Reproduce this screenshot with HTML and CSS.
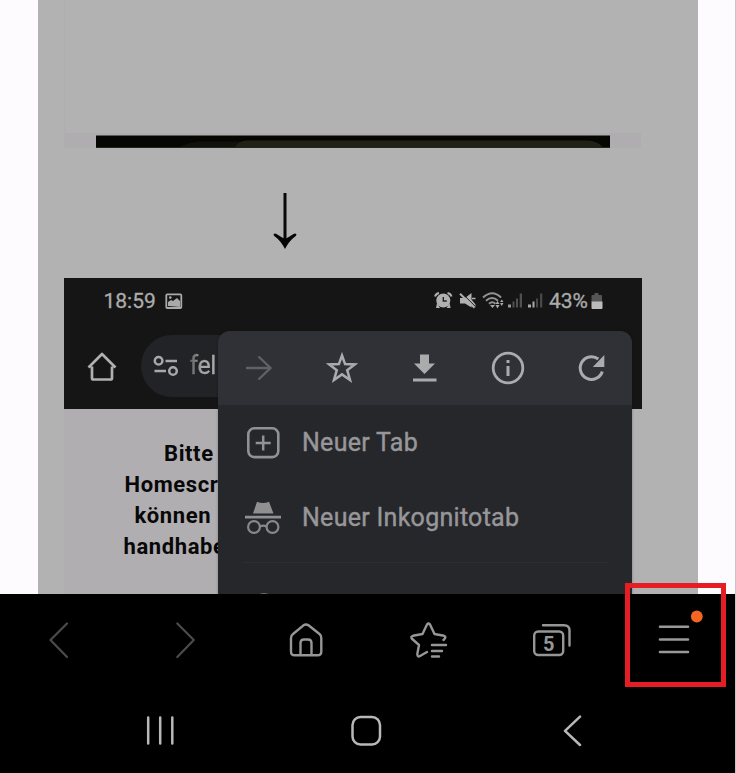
FILE: index.html
```html
<!DOCTYPE html>
<html lang="de">
<head>
<meta charset="utf-8">
<title>Browser</title>
<link rel="stylesheet" href="styles.css">
</head>
<body>
<div class="screen">
  <main class="viewport">
    <div class="page">
      <div class="upper"><div class="strip">
        <svg width="514" height="13" viewBox="0 0 514 13"><path d="M0 .500h514v12.500H0z" fill="#060703"/><path d="M84 12Q90 8 102 6.500H490Q504 7 507 12z" fill="#12110b"/><path d="M139 12Q143 5.500 151 5.500H490Q503 6 506 12z" fill="#222115"/><path d="M0 12.700h514" stroke="#44443b" stroke-width=".600"/></svg>
      </div></div>
      <div class="arrow"><svg width="26" height="58" viewBox="0 0 26 58"><path d="M13 1v48" stroke="#080808" stroke-width="3"/><path d="M1.500 42.500Q2.500 40.800 4.500 42Q9 45 13 47Q17 45 21.500 42Q23.500 40.800 24.500 42.500L24 43.800Q17 49 13 57Q9 49 2 43.800z" fill="#050505"/></svg></div>
      <div class="phone">
        <div class="status">
          <span class="time">18:59</span>
          <svg class="pic" width="18" height="17" viewBox="0 0 18 17"><rect x="1.300" y="1.300" width="15" height="13.700" rx="1" fill="none" stroke="#aaa" stroke-width="1.800"/><path d="M3 13v-4l3-2 2 1 4-3 3 3v6z" fill="#aaa"/><circle cx="5.300" cy="4.600" r="1.300" fill="#aaa"/></svg>
          <svg class="signals" width="112" height="20" viewBox="434 291 112 20">
            <g fill="#b0b0b0"><circle cx="443.300" cy="300.500" r="7"/><path d="M437 303l-1 5h4zM449.600 303l1 5h-4z"/></g>
            <path d="M435 296.500q1-3 4-3.500M451.500 296.500q-1-3-4-3.500" fill="none" stroke="#b0b0b0" stroke-width="2"/>
            <path d="M443.300 297v4h3.500" fill="none" stroke="#222" stroke-width="1.400"/>
            <path d="M460 298h5l6.500-5v6.500l4 5v3l-4-3v3l-6.500-4h-5z" fill="#b0b0b0"/><path d="M461.500 292.700l14 14" stroke="#151515" stroke-width="1"/><path d="M460 293.700l14.500 14" stroke="#b0b0b0" stroke-width="2"/><path d="M472 298.500h3.500" stroke="#b0b0b0" stroke-width="1.500"/>
            <g fill="none" stroke="#929292" stroke-width="2"><path d="M483 297.500q9.500-8.500 18 0M486 300.700q6-5.500 12 0M489 303.700q3-3 6.500 0"/></g><path d="M490 305h5l-2.500 3zM495.500 304l2-3 2 3zM495.500 305h4l-2 3.500zM500 302l1.800-2.500 1.700 2.500zM500 303h3.500l-1.800 3z" fill="#aaa"/>
            <path d="M508 304.500h3v3h-3z" fill="#999"/><path d="M512.500 301.500h2v6h-2zM516 298.500h2v9h-2zM519.700 293.500h2.300v14h-2.300z" fill="#505050"/>
            <path d="M528 304.500h3v3h-3zM532.500 301.500h2v6h-2z" fill="#aaa"/><path d="M536 298.500h2v9h-2zM540 293.500h2.300v14H540z" fill="#484848"/>
          </svg>
          <span class="percent">43%</span>
          <svg class="battery" width="12" height="18" viewBox="0 0 12 18"><path d="M3.500 1h4v2H10q1 0 1 1v6H.500V4q0-1 1-1h2z" fill="#555"/><path d="M.500 9.500H11.500V16q0 1-1 1h-9q-1 0-1-1z" fill="#bbb"/></svg>
        </div>
        <div class="toolbar">
          <svg class="house" width="30" height="30" viewBox="0 0 30 30"><path d="M1.500 15.500L15 2L28.500 15.500M5 14.500V26q0 1.500 1.500 1.500H23.500q1.500 0 1.500-1.500V14.500" fill="none" stroke="#b0b0b0" stroke-width="2.700" stroke-linejoin="round"/></svg>
          <div class="address">
            <svg width="26" height="22" viewBox="0 0 26 22"><g fill="none" stroke="#a8a8a8" stroke-width="2.500"><circle cx="5.600" cy="5.800" r="3.800"/><circle cx="20" cy="16" r="3.800"/><path d="M12.500 6H24M1.500 16H13"/></g></svg>
            <span>fel</span>
          </div>
        </div>
        <div class="article"><p class="l1">Bitte</p><p class="l2">Homescr</p><p class="l3">können</p><p class="l4">handhabe</p></div>
        <div class="menu">
          <div class="actions">
            <svg width="32" height="32" viewBox="0 0 32 32"><path d="M3 16h25M15.500 4.500L27.500 16L15.500 27.500" fill="none" stroke="#606166" stroke-width="2.400"/></svg>
            <svg width="32" height="32" viewBox="0 0 32 32"><path d="M16 3.500L19.100 12.100L28.800 12.400L21.200 18.200L24 28L16 22.400L8 28L10.800 18.200L3.200 12.400L12.900 12.100z" fill="none" stroke="#ababae" stroke-width="2.500"/></svg>
            <svg width="32" height="32" viewBox="-1 0 32 32"><path d="M11 2.500h9v9h6L15.500 22L5 11.500h6zM4 26.500h23.500v3H4z" fill="#ababae"/></svg>
            <svg width="34" height="34" viewBox="0 0 34 34"><circle cx="17" cy="17" r="14.800" fill="none" stroke="#ababae" stroke-width="2.800"/><path d="M15.500 15h3v10h-3zM15.500 9h3v3h-3z" fill="#ababae"/></svg>
            <svg width="32" height="32" viewBox="-.8 0 32 32"><path d="M26.500 19.500A11.300 11.300 0 1 1 22.500 7" fill="none" stroke="#ababae" stroke-width="3"/><path d="M28.500 3v12H17z" fill="#ababae"/></svg>
          </div>
          <div class="item"><svg width="36" height="36" viewBox="0 0 36 36"><rect x="3.300" y="3.300" width="30" height="28.800" rx="6" fill="none" stroke="#929295" stroke-width="2.600"/><path d="M18.200 10.500v15M10.700 18h15" stroke="#929295" stroke-width="2.500"/></svg><span>Neuer Tab</span></div>
          <div class="item"><svg width="36" height="36" viewBox="0 1.500 36 36"><path d="M8 15L12 3.300q3 1.300 6 1.300t6-1.300L28.500 15zM0 17.200h36v2.800H0z" fill="#909093"/><g fill="none" stroke="#88888b" stroke-width="2.200"><circle cx="9" cy="28.500" r="5.900"/><circle cx="27.500" cy="28.500" r="5.900"/><path d="M14.800 28q3.500-1.700 6.800 0"/></g></svg><span>Neuer Inkognitotab</span></div>
          <div class="divider"></div>
          <svg class="next" width="20" height="20" viewBox="0 0 20 20"><circle cx="10" cy="10" r="9" fill="none" stroke="#66666a" stroke-width="2"/></svg>
        </div>
      </div>
    </div>
  </main>
  <footer class="navigation">
    <svg width="736" height="92" viewBox="0 594 736 92" fill="none" stroke-linecap="round" stroke-linejoin="round">
      <g stroke="#4b4b4b" stroke-width="2.200"><path d="M67 623.500L50.500 640L67 657M177.300 623.500L193.800 640L177.300 657"/></g>
      <g stroke="#969696" stroke-width="2.400"><path d="M303.500 625.300Q306 623.500 308.500 625.300L319.500 634Q321.300 635.500 321.300 638V651.500Q321.300 655.300 317.500 655.300H294.700Q291 655.300 291 651.500V638Q291 635.500 293 634zM300.500 655V643Q300.500 639.500 304 639.500H308Q311.500 639.500 311.500 643V655"/>
      <path d="M427 652L420 656Q417.500 657.700 417.300 654L419 645L411.700 638.500Q410.500 636.500 413 635.800L422.500 634L427 624.500Q428.500 622.500 430 624.500L434.500 634L444 635.800Q447 636.800 443.500 640M432 645h14M432 651h10M432 656.500h7"/>
      <rect x="534.200" y="631.500" width="29" height="23.500" rx="4"/><path d="M543 625.200H564Q569.500 625.200 569.500 630.500V645.500"/></g>
      <path d="M660 626.800h28M660 639.500h28M660 652h28" stroke="#999" stroke-width="2.600"/><circle cx="696.800" cy="616.500" r="5.900" fill="#f26522"/>
      <text x="548.800" y="650.500" class="tabs">5</text>
    </svg>
  </footer>
  <footer class="system">
    <svg width="736" height="87" viewBox="0 686 736 87" fill="none" stroke="#b8b8b8" stroke-width="2.500" stroke-linecap="round" stroke-linejoin="round"><path d="M148.200 717.500v26M160.200 717.500v26M172.300 717.500v26M580 716.700L565 730.800L580 745"/><rect x="352.500" y="717" width="27.500" height="27.500" rx="8"/></svg>
  </footer>
  <div class="highlight"></div>
</div>
</body>
</html>
```
FILE: styles.css
```css
* { box-sizing: border-box; }
body { margin: 0; background: #fdfbfe; font-family: Roboto, sans-serif; }
svg { display: block; flex: none; }
p { margin: 0; }
.screen { position: relative; width: 736px; height: 773px; overflow: hidden; border-right: 1px solid #c6c4c7; }
.viewport { height: 593.500px; overflow: hidden; padding-left: 37.500px; background: #fdfbfe; }
.page { width: 660px; height: 594px; padding-left: 26.500px; background: #b2b2b2; }
.upper { display: flex; align-items: flex-end; width: 577px; height: 148px; padding-left: 32px; border-left: 1px solid #b0afb0; background: linear-gradient(#b2b2b2 133px, #b0adb1 133px); }
.strip { margin-left: -1px; }
.arrow { padding: 44px 0 0 208px; height: 129.500px; }
.phone { position: relative; width: 578px; height: 320px; background: linear-gradient(90deg, #b1aeb2 569px, #b2b2b2 569px); }
.status { display: flex; align-items: center; height: 47px; padding-left: 39.500px; background: #151515; color: #acacac; font-size: 21px; -webkit-text-stroke: .3px #acacac; }
.time { width: 61px; }
.signals { margin-left: 251px; }
.percent { margin-left: 3.500px; width: 42px; font-size: 21px; }
.toolbar { display: flex; align-items: center; height: 84px; padding: 0 0 2px 23px; background: #151515; }
.house { margin-top: 3px; }
.address { display: flex; align-items: center; width: 160px; height: 62px; margin-left: 23.500px; padding-left: 12.500px; border-radius: 31px; background: #222327; color: #a8a8a8; font-size: 25px; }
.address span { margin-left: 10.500px; letter-spacing: -.400px; background: linear-gradient(90deg, #606164, #a8a8a8 12px); background-clip: text; color: transparent; -webkit-text-stroke: .3px transparent; }
.article { padding: 30.800px 0 0; color: #080808; font-size: 22px; font-weight: 700; line-height: 30.800px; letter-spacing: .600px; white-space: nowrap; }
.l1 { margin-left: 100px; }
.l2 { margin-left: 60.500px; }
.l3 { margin-left: 70.500px; }
.l4 { margin-left: 59.500px; }
.menu { position: absolute; left: 154px; top: 53.500px; width: 414px; height: 300px; overflow: hidden; border-radius: 12px 12px 0 0; background: #26272b; box-shadow: 0 0 3px #0004; }
.actions { display: flex; align-items: center; justify-content: space-between; height: 74px; padding: 0 25px; background: #303137; }
.item { display: flex; align-items: center; height: 75px; padding-left: 27px; color: #97979a; font-size: 25px; letter-spacing: .280px; -webkit-text-stroke: .4px #97979a; }
.item span { margin-left: 21px; }
.divider { height: 1px; margin: 7px 25px 0; background: #2d2e32; }
.next { margin: 29.500px 0 0 36px; }
.navigation { height: 92.500px; background: #000; }
.system { height: 87px; background: #000; }
.tabs { fill: #969696; font-size: 20px; font-weight: 700; text-anchor: middle; }
.highlight { position: absolute; left: 625px; top: 583px; width: 101px; height: 104px; border: 5.500px solid #e51d25; }
```
